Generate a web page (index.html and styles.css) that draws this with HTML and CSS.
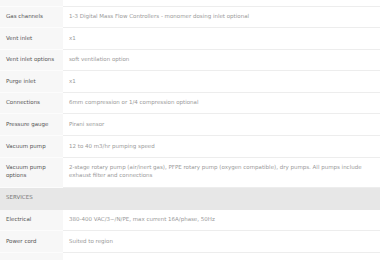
FILE: index.html
```html
<!DOCTYPE html>
<html>
<head>
<meta charset="utf-8">
<link rel="stylesheet" href="styles.css">
</head>
<body>
<table class="specs">
  <tbody>
    <tr class="stub"><th></th><td></td></tr>
    <tr><th>Gas channels</th><td>1-3 Digital Mass Flow Controllers - monomer dosing inlet optional</td></tr>
    <tr><th>Vent inlet</th><td>x1</td></tr>
    <tr><th>Vent inlet options</th><td>soft ventilation option</td></tr>
    <tr><th>Purge inlet</th><td>x1</td></tr>
    <tr><th>Connections</th><td>6mm compression or 1/4 compression optional</td></tr>
    <tr><th>Pressure gauge</th><td>Pirani sensor</td></tr>
    <tr><th>Vacuum pump</th><td>12 to 40 m3/hr pumping speed</td></tr>
    <tr class="tall"><th>Vacuum pump options</th><td>2-stage rotary pump (air/inert gas), PFPE rotary pump (oxygen compatible), dry pumps. All pumps include exhaust filter and connections</td></tr>
    <tr class="section"><th colspan="2">SERVICES</th></tr>
    <tr><th>Electrical</th><td>380-400 VAC/3~/N/PE, max current 16A/phase, 50Hz</td></tr>
    <tr><th>Power cord</th><td>Suited to region</td></tr>
    <tr class="tail"><th></th><td></td></tr>
  </tbody>
</table>
</body>
</html>
```

FILE: styles.css
```css
html, body {
  margin: 0;
  padding: 0;
  background: #ffffff;
  overflow: hidden;
}
.specs {
  width: 100%;
  border-collapse: collapse;
  font-family: "DejaVu Sans", sans-serif;
  font-size: 5.5px;
  line-height: 7.7px;
}
.specs th,
.specs td {
  height: 21.6px;
  padding: 0 6px;
  vertical-align: middle;
  text-align: left;
  box-sizing: border-box;
}
.specs th {
  width: 63px;
  background: #f7f7f7;
  color: #555555;
  font-weight: normal;
  border-bottom: 1px solid #fcfcfc;
}
.specs td {
  color: #9a9a9a;
  border-bottom: 1px solid #ededed;
}
.specs .stub th,
.specs .stub td {
  height: 6px;
}
.specs .tail th,
.specs .tail td {
  height: 8px;
  border-bottom: none;
}
.specs .tall th,
.specs .tall td {
  height: 30px;
}
.specs .section th {
  background: #e7e7e7;
  color: #777777;
  height: 22px;
  border-bottom: 1px solid #e7e7e7;
}
```
